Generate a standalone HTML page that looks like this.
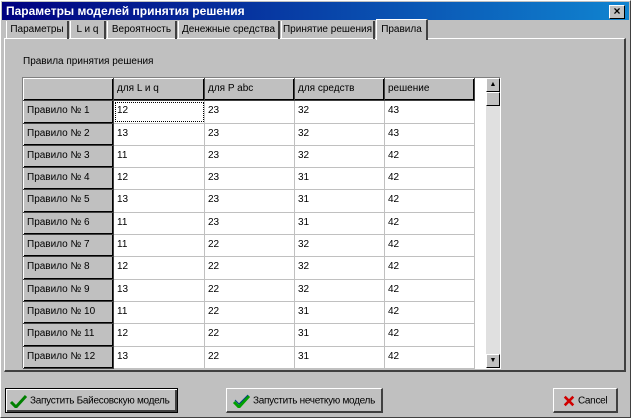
<!DOCTYPE html>
<html><head><meta charset="utf-8"><style>
*{box-sizing:border-box;margin:0;padding:0}
body{width:631px;height:418px;background:#c0c0c0;font-family:"Liberation Sans",sans-serif;font-size:10px;color:#000;position:relative;overflow:hidden}
.win{position:absolute;left:0;top:0;width:631px;height:418px;border:1px solid #fff;border-right-color:#404040;border-bottom-color:#404040}
.title{position:absolute;left:2px;top:2px;width:627px;height:18px;background:linear-gradient(90deg,#000080,#1084d0);color:#fff;font-weight:bold;font-size:12px;padding:2px 4px}
.xbtn{position:absolute;right:4px;top:3px;width:16px;height:14px;background:#c0c0c0;border:1px solid #fff;border-right-color:#000;border-bottom-color:#000;color:#000;font-size:12px;line-height:11px;text-align:center;font-weight:bold}
.tab{position:absolute;top:21px;height:18px;padding:3px 0 0;text-align:center;border-left:1px solid #fff;border-right:2px solid #404040;font-size:10px;white-space:nowrap;overflow:hidden}
.panel{position:absolute;left:4px;top:38px;width:622px;height:334px;border:1px solid #fff;border-right:2px solid #404040;border-bottom:2px solid #404040}
.lbl{position:absolute;left:23px;top:56px}
table{position:absolute;left:23px;top:78px;border-collapse:collapse;background:#fff;table-layout:fixed}
td{height:22.3px;border:1px solid #c0c0c0;padding:0 3px;vertical-align:top;padding-top:4px;font-size:10px;white-space:nowrap;overflow:hidden}
td.f{background:#c0c0c0;border:1px solid #404040;border-top-color:#fff;border-left-color:#fff;box-shadow:inset -1px -1px 0 #000}
.gridbox{position:absolute;left:22px;top:77px;width:479px;height:292px;background:#fff;border:1px solid #808080;border-right-color:#fff;border-bottom-color:#fff}
.sb{position:absolute;left:486px;top:78px;width:14px;height:290px;background:#e0e0e0}
.sbb{position:absolute;left:0;width:14px;height:14px;background:#c0c0c0;border:1px solid #fff;border-right-color:#000;border-bottom-color:#000;font-size:7px;text-align:center;line-height:12px}
.btn{position:absolute;top:388px;height:25px;background:#c0c0c0;border:1px solid #fff;border-right:2px solid #404040;border-bottom:2px solid #404040;font-size:10px;letter-spacing:-0.3px;padding:5px 3px;white-space:nowrap;overflow:hidden}
.chk{display:inline-block;width:18px;vertical-align:middle;margin-right:3px}
</style></head><body>
<div class="win"></div>
<div class="title">Параметры моделей принятия решения<div class="xbtn">×</div></div>
<div class="panel"></div>
<div class="tab" style="left:6px;width:63px">Параметры</div>
<div class="tab" style="left:70px;width:36px">L и q</div>
<div class="tab" style="left:107px;width:70px">Вероятность</div>
<div class="tab" style="left:178px;width:102px">Денежные средства</div>
<div class="tab" style="left:281px;width:94px">Принятие решения</div>
<div class="tab" style="left:376px;width:52px;top:19px;height:21px;background:#c0c0c0;border-top:1px solid #fff;padding-top:4px">Правила</div>
<div class="lbl">Правила принятия решения</div>
<div class="gridbox"></div>
<table>
<colgroup><col style="width:90px"><col style="width:91px"><col style="width:90px"><col style="width:90px"><col style="width:90px"></colgroup>
<tr><td class="f"></td><td class="f">для L и q</td><td class="f">для P abc</td><td class="f">для средств</td><td class="f">решение</td></tr>
<tr><td class="f">Правило № 1</td><td style="outline:1px dotted #000;outline-offset:-2px">12</td><td>23</td><td>32</td><td>43</td></tr>
<tr><td class="f">Правило № 2</td><td>13</td><td>23</td><td>32</td><td>43</td></tr>
<tr><td class="f">Правило № 3</td><td>11</td><td>23</td><td>32</td><td>42</td></tr>
<tr><td class="f">Правило № 4</td><td>12</td><td>23</td><td>31</td><td>42</td></tr>
<tr><td class="f">Правило № 5</td><td>13</td><td>23</td><td>31</td><td>42</td></tr>
<tr><td class="f">Правило № 6</td><td>11</td><td>23</td><td>31</td><td>42</td></tr>
<tr><td class="f">Правило № 7</td><td>11</td><td>22</td><td>32</td><td>42</td></tr>
<tr><td class="f">Правило № 8</td><td>12</td><td>22</td><td>32</td><td>42</td></tr>
<tr><td class="f">Правило № 9</td><td>13</td><td>22</td><td>32</td><td>42</td></tr>
<tr><td class="f">Правило № 10</td><td>11</td><td>22</td><td>31</td><td>42</td></tr>
<tr><td class="f">Правило № 11</td><td>12</td><td>22</td><td>31</td><td>42</td></tr>
<tr><td class="f">Правило № 12</td><td>13</td><td>22</td><td>31</td><td>42</td></tr>
</table>
<div class="sb"><div class="sbb" style="top:0">▲</div><div class="sbb" style="top:14px"></div><div class="sbb" style="bottom:0">▼</div></div>
<div class="btn" style="left:5px;width:173px;border:1px solid #000;box-shadow:inset 1px 1px 0 #fff,inset -2px -2px 0 #404040"><svg class="chk" width="18" height="14" viewBox="0 0 18 14"><path d="M2 8 L7 13 L17 2" stroke="#008000" stroke-width="3" fill="none"/></svg>Запустить Байесовскую модель</div>
<div class="btn" style="left:226px;width:157px;padding-left:5px"><svg class="chk" width="18" height="14" viewBox="0 0 18 14"><path d="M2 8 L7 13 L17 2" stroke="#00a000" stroke-width="3" fill="none"/><path d="M3 6 L7 10 L16 1" stroke="#004080" stroke-width="1" fill="none"/></svg>Запустить нечеткую модель</div>
<div class="btn" style="left:553px;width:65px;padding-left:9px"><svg class="chk" width="12" height="14" viewBox="0 0 14 14" style="width:12px"><path d="M2 2 L12 12 M12 2 L2 12" stroke="#d00000" stroke-width="3" fill="none"/></svg>Cancel</div>
</body></html>
